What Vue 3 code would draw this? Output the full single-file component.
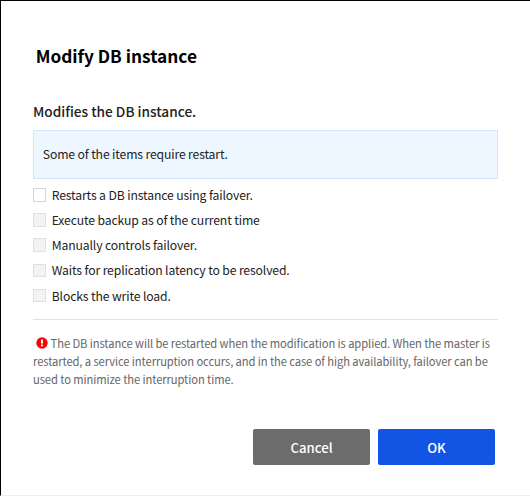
<script setup>
import { ref } from 'vue'

const options = ref([
  { label: 'Restarts a DB instance using failover.', disabled: false },
  { label: 'Execute backup as of the current time', disabled: true },
  { label: 'Manually controls failover.', disabled: true },
  { label: 'Waits for replication latency to be resolved.', disabled: true },
  { label: 'Blocks the write load.', disabled: true },
])
</script>

<template>
  <main class="dialog">
    <h1 class="title">Modify DB instance</h1>
    <h2 class="subtitle">Modifies the DB instance.</h2>
    <div class="info">Some of the items require restart.</div>
    <div class="options">
      <label v-for="o in options" :key="o.label" class="option">
        <input type="checkbox" class="check" :disabled="o.disabled" />
        <span>{{ o.label }}</span>
      </label>
    </div>
    <p class="notice">
      <svg class="alert" width="12" height="12" viewBox="0 0 12 12">
        <circle cx="6" cy="6" r="5.7" fill="#fb0007" />
        <path d="M6 2.6v4" stroke="#fff" stroke-width="2" />
        <path d="M6 7.6v1.7" stroke="#fff" stroke-width="2" />
      </svg>The DB instance will be restarted when the modification is applied. When the master is<br />
      restarted, a service interruption occurs, and in the case of high availability, failover can be<br />
      used to minimize the interruption time.
    </p>
    <div class="actions">
      <button class="btn cancel">Cancel</button>
      <button class="btn ok">OK</button>
    </div>
  </main>
</template>

<style>
body {
  margin: 0;
  background: #fff;
}
</style>

<style scoped>
.dialog {
  box-sizing: border-box;
  width: 530px;
  height: 496px;
  padding: 42px 32px 0 32px;
  border-top: 1px solid #000;
  border-left: 1px solid #000;
  border-bottom: 1px solid #eee;
  background: #fff;
  font-family: "Noto Sans CJK KR", sans-serif;
  color: #222;
  white-space: nowrap;
}
.title {
  margin: 0 0 0 2.7px;
  font-size: 17.25px;
  line-height: 26px;
  font-weight: 700;
  color: #000;
}
.subtitle {
  margin: 32px 0 0;
  font-size: 13.65px;
  line-height: 20px;
  font-weight: 500;
}
.info {
  box-sizing: border-box;
  width: 465px;
  height: 49px;
  margin-top: 9px;
  padding-left: 8.8px;
  border: 1px solid #d3e5f9;
  background: #eef6ff;
  font-size: 12.2px;
  letter-spacing: -0.14px;
  line-height: 47px;
}
.options {
  width: 465px;
  height: 141px;
  padding-top: 3.8px;
  box-sizing: border-box;
  border-bottom: 1px solid #e2e2e2;
}
.option {
  display: flex;
  align-items: center;
  height: 25.2px;
  font-size: 12.2px;
  letter-spacing: -0.13px;
  line-height: 25px;
}
.check {
  appearance: none;
  box-sizing: border-box;
  width: 13px;
  height: 13.55px;
  margin: -1.15px 5.7px 0 0;
  border: 1px solid #d5d5d5;
  background: #fff;
}
.check:disabled {
  border-color: #e0e0e0;
  background: #f2f3f3;
}
.notice {
  margin: 14px 0 0;
  font-size: 11.2px;
  letter-spacing: -0.09px;
  line-height: 18px;
  color: #666;
}
.alert {
  margin: 0 2.6px 0 3px;
  vertical-align: -1px;
}
.actions {
  display: flex;
  gap: 8px;
  margin: 41px 0 0 220px;
}
.btn {
  width: 117px;
  height: 36px;
  padding: 1px 0 0;
  border: 0;
  border-radius: 2px;
  color: #fff;
  font-family: inherit;
  font-size: 13.2px;
  line-height: 35px;
  font-weight: 500;
}
.cancel {
  background: #6c6c6c;
}
.ok {
  background: #1254e4;
}
</style>
